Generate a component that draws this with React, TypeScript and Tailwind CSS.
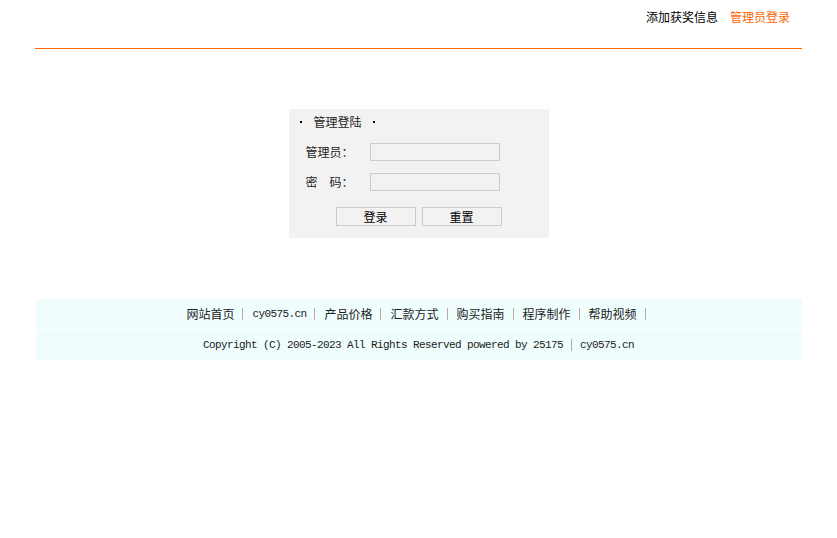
export default function App() {
  const cjk = "font-['Noto_Sans_CJK_SC','Noto_Sans',sans-serif]";
  const mono = "font-['Liberation_Mono',monospace] text-[11px] tracking-[-0.6px]";
  const nav = ["网站首页", "cy0575.cn", "产品价格", "汇款方式", "购买指南", "程序制作", "帮助视频"];

  return (
    <div className={`min-h-[538px] bg-white text-[12px] text-[#222] ${cjk}`}>
      {/* top bar */}
      <div className="w-[767px] mx-auto h-[49px] border-b border-[#ff6600] flex justify-end items-start pt-[9px] pr-[12px] gap-[12px] leading-[16px]">
        <a className="text-black">添加获奖信息</a>
        <a className="text-[#ff6600]">管理员登录</a>
      </div>

      {/* login box */}
      <div className="w-[260px] mx-auto mt-[60px] bg-[#f2f2f2] pb-[12px]">
        <div className="h-[26px] flex items-center pl-[6px] leading-none">
          <span className="w-[12px] flex justify-center">
            <span className="w-[2px] h-[2px] bg-black" />
          </span>
          <span className="ml-[7px]">管理登陆</span>
          <span className="ml-[6px] w-[12px] flex justify-center">
            <span className="w-[2px] h-[2px] bg-black" />
          </span>
        </div>
        <div className="h-[34px] flex items-center pl-[17px]">
          <span className="w-[64px]">管理员：</span>
          <input className="w-[130px] h-[18px] border border-[#cccccc] bg-[#f2f2f2] outline-none" />
        </div>
        <div className="h-[26px] flex items-center pl-[17px]">
          <span className="w-[64px] flex">
            <span>密</span>
            <span className="ml-[12px]">码：</span>
          </span>
          <input type="password" className="w-[130px] h-[18px] border border-[#cccccc] bg-[#f2f2f2] outline-none" />
        </div>
        <div className="mt-[12px] flex pl-[47px] gap-[6px]">
          <button className="w-[80px] h-[19px] border border-[#cccccc] bg-[#f2f2f2] text-black text-[12px] leading-none">登录</button>
          <button className="w-[80px] h-[19px] border border-[#cccccc] bg-[#f2f2f2] text-black text-[12px] leading-none">重置</button>
        </div>
      </div>

      {/* footer */}
      <div className="w-[766px] mx-auto mt-[61px]">
        <div className="h-[30px] bg-[#f0fdfd] flex items-center justify-center pl-[4px] text-[#222]">
          {nav.map((n) => (
            <span key={n} className="flex items-center">
              <span className={n === "cy0575.cn" ? mono : ""}>{n}</span>
              <span className="ml-[8px] mr-[9px] w-px h-[12px] bg-[#bba8a8]" />
            </span>
          ))}
        </div>
        <div className="h-[30px] mt-px bg-[#f0fdfd] flex items-center justify-center text-[#222]">
          <span className={mono}>Copyright (C) 2005-2023 All Rights Reserved powered by 25175</span>
          <span className="mx-[8px] w-px h-[12px] bg-[#bba8a8]" />
          <span className={mono}>cy0575.cn</span>
        </div>
      </div>
    </div>
  );
}
